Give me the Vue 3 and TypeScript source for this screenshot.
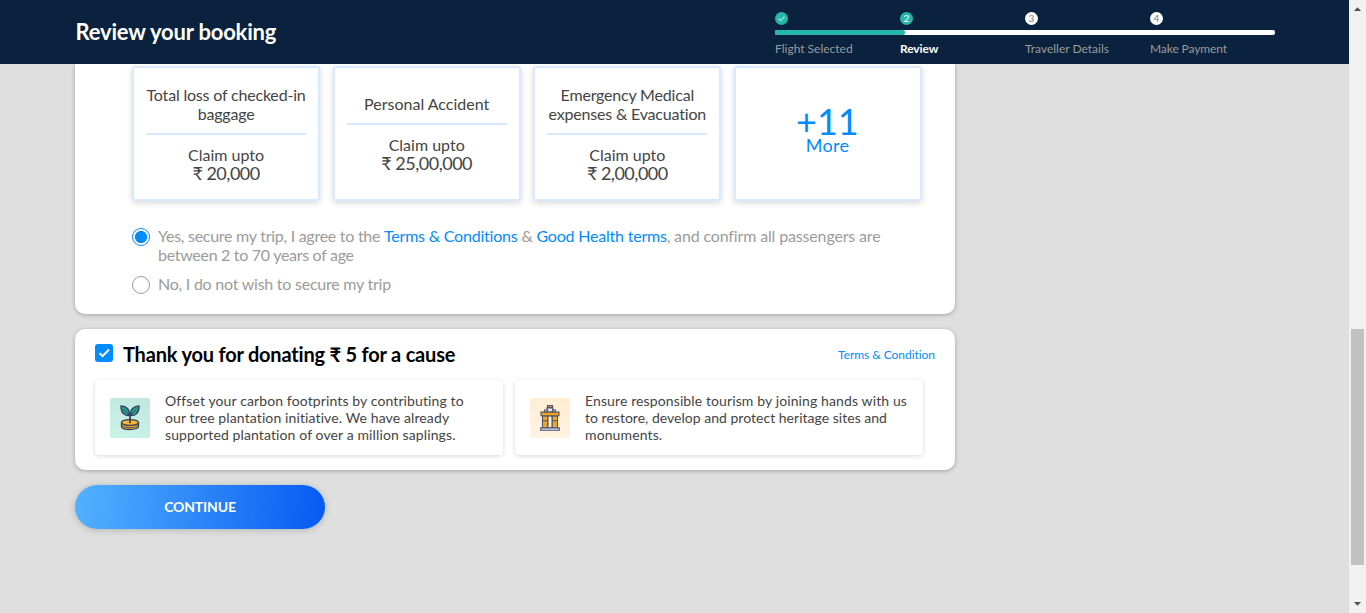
<script setup lang="ts">
interface Step { label: string; mark: string; state: 'done' | 'active' | 'todo' }
interface Benefit { lines: string[]; amount: string }

const steps: Step[] = [
  { label: 'Flight Selected', mark: '', state: 'done' },
  { label: 'Review', mark: '2', state: 'active' },
  { label: 'Traveller Details', mark: '3', state: 'todo' },
  { label: 'Make Payment', mark: '4', state: 'todo' },
]

const benefits: Benefit[] = [
  { lines: ['Total loss of checked-in', 'baggage'], amount: '₹ 20,000' },
  { lines: ['Personal Accident'], amount: '₹ 25,00,000' },
  { lines: ['Emergency Medical', 'expenses & Evacuation'], amount: '₹ 2,00,000' },
]

const causes = [
  {
    kind: 'tree',
    lines: [
      'Offset your carbon footprints by contributing to',
      'our tree plantation initiative. We have already',
      'supported plantation of over a million saplings.',
    ],
  },
  {
    kind: 'heritage',
    lines: [
      'Ensure responsible tourism by joining hands with us',
      'to restore, develop and protect heritage sites and',
      'monuments.',
    ],
  },
]
</script>

<template>
  <div class="screen">
    <div class="page">
      <header class="header">
        <h1 class="title">Review your booking</h1>
        <div class="progress">
          <div class="marks">
            <div v-for="s in steps" :key="s.label" class="cell">
              <span class="mark" :class="s.state">
                <svg v-if="s.state === 'done'" width="13" height="13" viewBox="0 0 13 13">
                  <path d="M3.5 6.6 5.6 8.6 9.5 4.6" fill="none" stroke="#b9e8e1" stroke-width="1.1" />
                </svg>
                <template v-else>{{ s.mark }}</template>
              </span>
            </div>
          </div>
          <div class="track"><div class="fill"></div></div>
          <div class="labels">
            <div v-for="s in steps" :key="s.label" class="cell label" :class="s.state">{{ s.label }}</div>
          </div>
        </div>
      </header>

      <main class="content">
        <section class="panel insurance">
          <div class="benefits">
            <div v-for="b in benefits" :key="b.amount" class="benefit" :class="{ single: b.lines.length === 1 }">
              <div class="name"><div v-for="l in b.lines" :key="l">{{ l }}</div></div>
              <div class="claim">Claim upto</div>
              <div class="amount">{{ b.amount }}</div>
            </div>
            <div class="benefit more">
              <div class="count">+11</div>
              <div class="more-label">More</div>
            </div>
          </div>
          <div class="option">
            <span class="radio on"></span>
            <div class="option-text">
              <div class="agree"><span class="lead">Yes, secure my trip, I agree to the </span><a>Terms &amp; Conditions</a> &amp; <a>Good Health terms</a><span class="tail">, and confirm all passengers are</span></div>
              <div class="age">between 2 to 70 years of age</div>
            </div>
          </div>
          <div class="option second">
            <span class="radio"></span>
            <div class="option-text">No, I do not wish to secure my trip</div>
          </div>
        </section>

        <section class="panel donation">
          <div class="donation-head">
            <span class="checkbox">
              <svg width="18" height="18" viewBox="0 0 18 18">
                <path d="M4.6 9.3 7.6 12.2 14 5.5" fill="none" stroke="#fff" stroke-width="2" />
              </svg>
            </span>
            <h2 class="heading">Thank you for donating ₹ 5 for a cause</h2>
            <a class="terms">Terms &amp; Condition</a>
          </div>
          <div class="causes">
            <div v-for="c in causes" :key="c.kind" class="cause" :class="c.kind">
              <span class="icon">
                <svg v-if="c.kind === 'tree'" width="40" height="40" viewBox="0 0 40 40">
                  <g stroke="#36405f" stroke-width="1.3" stroke-linejoin="round">
                    <path d="M11.5 24.5v4c0 4 17 4 17 0v-4z" fill="#f0a92b" />
                    <ellipse cx="20" cy="24.5" rx="8.5" ry="2.9" fill="#fdb62f" />
                    <path d="M11.5 27.2c1 3.2 16 3.2 17 0" fill="none" stroke-width=".8" />
                    <path d="M19.3 17.4c-4.8.7-8.2-2.3-8.4-9.5 5.5.1 9.2 3.8 8.4 9.5z" fill="#25a18d" />
                    <path d="M20.7 17.4c4.8.7 8.2-2.3 8.4-9.5-5.5.1-9.2 3.8-8.4 9.5z" fill="#25a18d" />
                    <path d="M13.7 11.2 20 18l6.3-6.8" fill="none" stroke-width=".9" />
                    <path d="M20 17v8.2" fill="none" stroke-width="1.8" />
                  </g>
                </svg>
                <svg v-else width="40" height="40" viewBox="0 0 40 40">
                  <g stroke="#515269" stroke-width="1.1">
                    <path d="M17.5 9.5V7.6h5v1.9z" fill="#f0ac36" />
                    <path d="M14.5 14V12h2.5V10h6v2h2.5v2z" fill="#e8edf7" />
                    <path d="M17.5 11v3m5-3v3" />
                    <path d="M12.5 18H18v12h-5.5zM22 18h5.5v12H22z" fill="#efa927" />
                    <path d="M18 18h4v12h-4z" fill="#fff1df" />
                    <path d="M12.5 22.8H18m4 0h5.5" />
                    <path d="M11 14.1h18v3.7H11z" fill="#efa31b" />
                    <path d="M10.7 29.9h18.6v2.4H10.7z" fill="#d9def0" />
                  </g>
                </svg>
              </span>
              <div class="cause-text"><div v-for="l in c.lines" :key="l">{{ l }}</div></div>
            </div>
          </div>
        </section>

        <button class="continue" type="button">CONTINUE</button>
      </main>
    </div>

    <div class="scrollbar">
      <svg class="arrow" width="17" height="17" viewBox="0 0 17 17"><path d="M5 11 8.5 7.2 12 11z" fill="#505050" /></svg>
      <div class="thumb"></div>
      <svg class="arrow" width="17" height="17" viewBox="0 0 17 17"><path d="M5 6h7L8.5 9.8z" fill="#505050" /></svg>
    </div>
  </div>
</template>

<style>
body { margin: 0; overflow: hidden; }
</style>

<style scoped>
* { box-sizing: border-box; }
.screen {
  display: flex;
  width: 1366px;
  height: 613px;
  overflow: hidden;
  background: #dfdfdf;
  font-family: Lato, "Noto Sans", sans-serif;
  font-size: 16px;
  color: #444;
  white-space: nowrap;
}
.page { width: 1349px; height: 613px; }
.header {
  position: relative;
  display: flex;
  justify-content: space-between;
  height: 64px;
  padding: 0 74px 0 75.5px;
  background: #0a223d;
  color: #fff;
}
.title { margin: 0; font-size: 22px; line-height: 64px; font-weight: 700; letter-spacing: -0.18px; }
.progress { width: 500px; padding-top: 12px; }
.marks, .labels { display: flex; }
.cell { width: 125px; }
.mark {
  display: flex;
  align-items: center;
  justify-content: center;
  width: 13px;
  height: 13px;
  border-radius: 50%;
  background: #fff;
  color: #777;
  font-size: 10px;
  line-height: 13px;
}
.mark.done, .mark.active { background: #26b5a9; color: #fff; }
.track { height: 5px; margin-top: 5px; border-radius: 2px; background: #fff; overflow: hidden; }
.fill { width: 130px; height: 5px; border-radius: 0 2px 2px 0; background: #26b5a9; }
.labels { margin-top: 6px; }
.label { font-size: 12px; line-height: 16px; color: #9b9b9b; }
.label.active { color: #fff; font-weight: 700; letter-spacing: -0.1px; }
.label:last-child { letter-spacing: -0.1px; }
.content { width: 880px; margin-left: 75px; }
.panel { background: #fff; box-shadow: 0 1px 4px rgba(0, 0, 0, 0.28); }
.insurance { height: 250px; padding: 2px 33px 0 57px; border-radius: 0 0 10px 10px; }
.benefits { display: grid; grid-template-columns: repeat(4, minmax(0, 1fr)); column-gap: 12.5px; }
.benefit {
  display: flex;
  flex-direction: column;
  justify-content: center;
  height: 135px;
  padding: 0 12px;
  border: 2px solid #d8eaff;
  border-radius: 3px;
  box-shadow: 0 2px 6px rgba(0, 0, 0, 0.16);
  text-align: center;
}
.name { padding-bottom: 10px; border-bottom: 2px solid #d8eaff; line-height: 19px; letter-spacing: -0.19px; }
.single { padding-bottom: 2px; }
.single .name { letter-spacing: 0; }
.name div { display: flex; justify-content: center; }
.claim { padding-top: 10px; line-height: 19px; }
.amount { font-size: 18px; line-height: 18px; letter-spacing: -0.5px; }
.more { justify-content: flex-start; padding: 35px 13px 0 12px; color: #008cff; }
.count { font-size: 36px; line-height: 36px; }
.more-label { font-size: 18px; line-height: 12px; letter-spacing: 0.3px; }
.option { display: flex; margin-top: 26px; color: #9b9b9b; line-height: 19px; letter-spacing: -0.21px; }
.option.second { margin-top: 10px; }
.option-text { height: 38px; margin-top: -1px; }
.option.second .option-text { height: 19px; margin-top: 0; letter-spacing: -0.24px; }
.lead { letter-spacing: -0.27px; }
.tail { letter-spacing: -0.15px; }
.age { letter-spacing: -0.3px; }
.option a { color: #008cff; }
.radio { width: 18px; height: 18px; margin: 1px 8px 0 0; border: 1px solid #9b9b9b; border-radius: 50%; }
.option.second .radio { margin-top: 2px; }
.radio.on { border-color: #008cff; background: radial-gradient(circle, #008cff 0 5.7px, #fff 6.3px); }
.donation { height: 141px; margin-top: 15px; padding: 15px 20px 0; border-radius: 10px; }
.donation-head { display: flex; height: 36px; }
.checkbox { width: 18px; height: 18px; margin-right: 10px; border-radius: 3px; background: #008cff; }
.checkbox svg { display: block; }
.heading { margin: -1px 0 0; font-size: 20px; line-height: 22px; font-weight: 700; letter-spacing: -0.2px; color: #000; }
.terms { margin-left: auto; font-size: 12px; line-height: 22px; letter-spacing: -0.05px; color: #008cff; }
.causes { display: flex; gap: 12px; }
.cause {
  display: flex;
  width: 408px;
  height: 75px;
  padding: 12px 15px;
  border-radius: 4px;
  box-shadow: 0 1px 4px rgba(0, 0, 0, 0.16);
}
.icon { width: 40px; height: 40px; margin: 6px 15px 0 0; border-radius: 2px; }
.icon svg { display: block; }
.tree .icon { background: linear-gradient(20deg, #caf4e6, #c1e6df); }
.heritage .icon { background: linear-gradient(20deg, #fff4e4, #ffebd0); }
.cause-text { font-size: 14px; line-height: 17px; letter-spacing: 0.115px; }
.heritage .cause-text div:nth-child(2) { letter-spacing: 0.02px; }
.continue {
  display: block;
  width: 250px;
  height: 44px;
  margin-top: 15px;
  padding: 0;
  border: 0;
  border-radius: 22px;
  background: linear-gradient(93deg, #53b2fe, #065af3);
  box-shadow: 0 1px 7px rgba(0, 0, 0, 0.2);
  color: #fff;
  font: 700 14px/44px Lato, sans-serif;
  letter-spacing: -0.15px;
}
.scrollbar { display: flex; flex-direction: column; width: 17px; height: 613px; background: #f1f1f1; }
.arrow { display: block; flex: none; }
.thumb { width: 13px; height: 236px; margin: 312px 2px auto; background: #c1c1c1; flex: none; }
</style>
